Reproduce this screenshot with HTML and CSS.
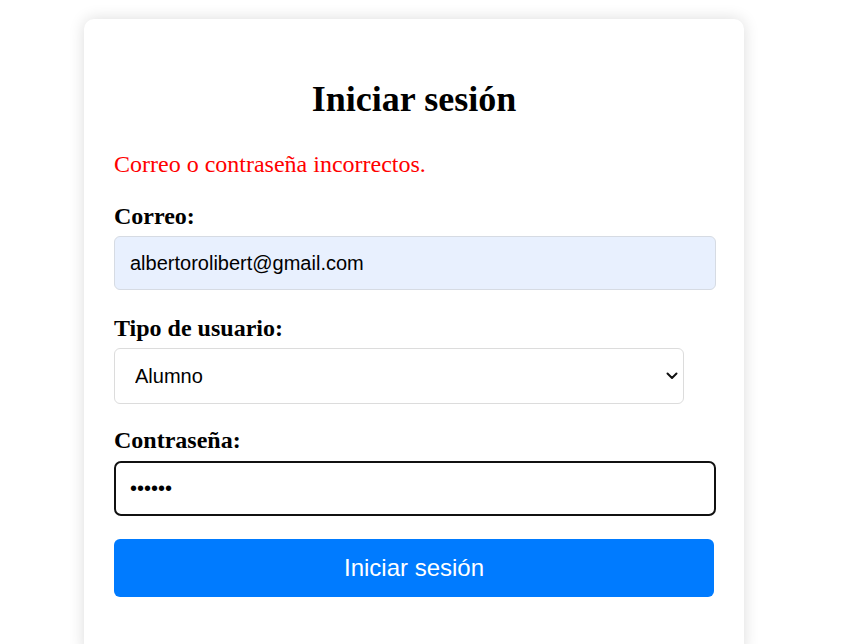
FILE: index.html
```html
<!DOCTYPE html>
<html lang="es">
<head>
<meta charset="utf-8">
<title>Iniciar sesión</title>
<link rel="stylesheet" href="styles.css">
</head>
<body>
<div class="page">
  <div class="card">
    <h2 class="title">Iniciar sesión</h2>
    <p class="error">Correo o contraseña incorrectos.</p>
    <form class="form">
      <label class="label" for="correo">Correo:</label>
      <input class="field autofill" id="correo" type="email" value="albertorolibert@gmail.com">
      <label class="label" for="tipo">Tipo de usuario:</label>
      <div class="select-wrap">
        <select class="select" id="tipo">
          <option>Alumno</option>
          <option>Profesor</option>
        </select>
        <svg class="chevron" width="12" height="8" viewBox="0 0 12 8"><path d="M1.5 1.5 L6 6 L10.5 1.5" fill="none" stroke="#111" stroke-width="2" stroke-linecap="round" stroke-linejoin="round"/></svg>
      </div>
      <label class="label pass-label" for="pass">Contraseña:</label>
      <input class="field focused" id="pass" type="password" value="123456">
      <button class="submit" type="button">Iniciar sesión</button>
    </form>
  </div>
</div>
</body>
</html>
```

FILE: styles.css
```css
html, body {
  margin: 0;
  padding: 0;
  background: #ffffff;
}

body {
  font-family: "Liberation Serif", "Times New Roman", serif;
  color: #000;
  overflow: hidden;
}

.page {
  padding: 19px 0 0 84px;
}

.card {
  width: 600px;
  padding: 30px 30px 60px;
  background: #fff;
  border-radius: 10px;
  box-shadow: 0 0 16px rgba(0, 0, 0, 0.14);
}

.title {
  font-size: 36px;
  font-weight: bold;
  text-align: center;
  margin: 30px 0 30px;
  line-height: 41px;
}

.error {
  color: #ff0000;
  font-size: 24px;
  line-height: 28px;
  margin: 0 0 24px;
}

.form {
  display: flex;
  flex-direction: column;
  align-items: flex-start;
}

.label {
  display: block;
  font-size: 24px;
  font-weight: bold;
  line-height: 28px;
  margin-bottom: 6px;
}

.pass-label {
  margin-bottom: 7px;
}

.field {
  box-sizing: border-box;
  width: 602px;
  height: 54px;
  padding: 0 15px;
  font-family: "Liberation Sans", Arial, sans-serif;
  font-size: 20px;
  color: #000;
  border: 1px solid #dcdcdc;
  border-radius: 6px;
  background: #fff;
  margin: 0 0 24px;
  outline: none;
}

.autofill {
  background: #e8f0fe;
  border-color: #d6dbe3;
}

.focused {
  height: 55px;
  border: 2px solid #111;
  border-radius: 7px;
  padding: 0 14px;
  margin-bottom: 23px;
}

.select-wrap {
  position: relative;
  width: 570px;
  margin: 0 0 22px;
}

.select {
  box-sizing: border-box;
  width: 570px;
  height: 56px;
  padding: 0 0 0 20px;
  font-family: "Liberation Sans", Arial, sans-serif;
  font-size: 20px;
  color: #000;
  border: 1px solid #dcdcdc;
  border-radius: 6px;
  background: #fff;
  appearance: none;
  -webkit-appearance: none;
  outline: none;
  display: block;
}

.chevron {
  position: absolute;
  right: 6px;
  top: 24px;
  pointer-events: none;
}

.submit {
  width: 600px;
  height: 58px;
  border: none;
  border-radius: 6px;
  background: #007bff;
  color: #fff;
  font-family: "Liberation Sans", Arial, sans-serif;
  font-size: 24px;
  padding: 0;
  cursor: pointer;
}
```
